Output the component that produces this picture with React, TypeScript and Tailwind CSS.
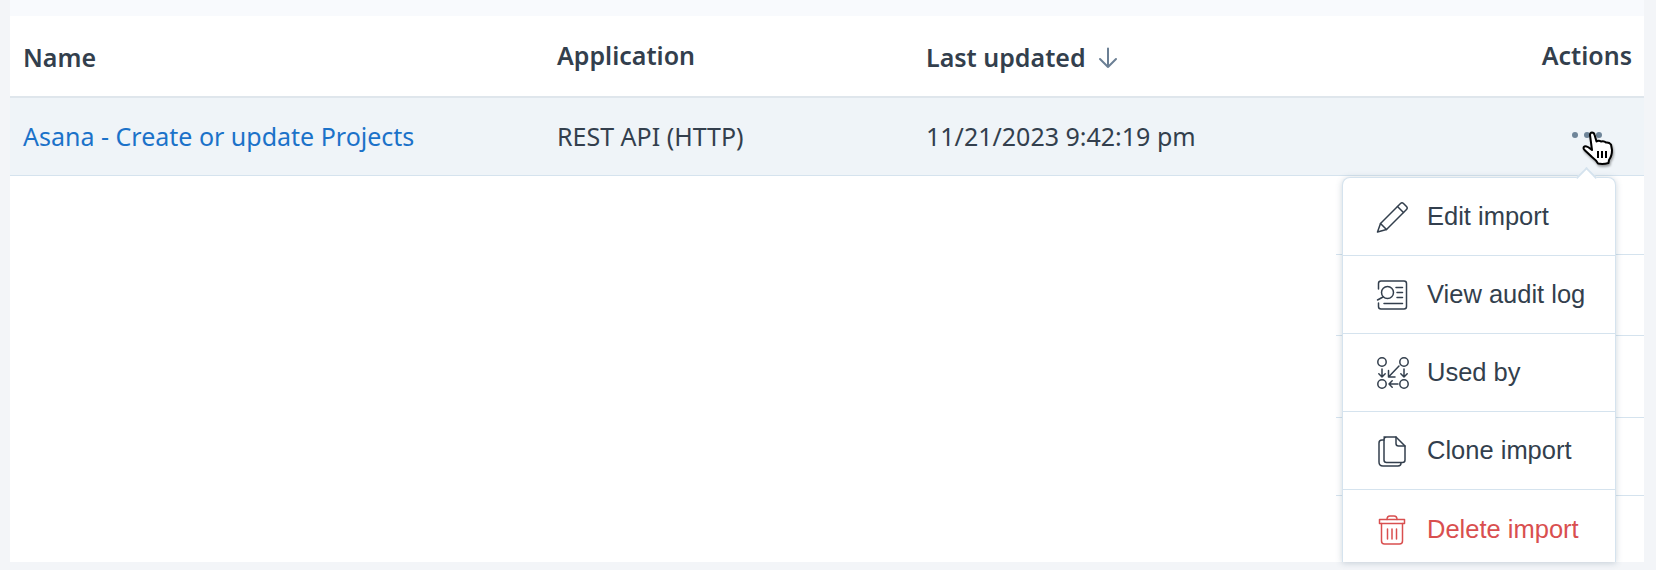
/**
 * Imports table with the row action menu open.
 */

const stroke = '#333f4d';

function PencilIcon() {
  return (
    <svg width="32" height="32" viewBox="0 0 32 32" fill="none" stroke={stroke} strokeWidth="1.5" strokeLinejoin="round" strokeLinecap="round">
      <path d="M1.5 31 L4.5 22.5 L24.5 2.5 Q26 1 27.5 2.5 L30.5 5.5 Q32 7 30.5 8.5 L10.5 28.5 Z" />
      <path d="M4.5 22.5 L10.5 28.5" />
      <path d="M21.5 5.5 L27.5 11.5" />
    </svg>
  );
}

function AuditIcon() {
  return (
    <svg width="32" height="32" viewBox="0 0 32 32" fill="none" stroke={stroke} strokeWidth="1.5" strokeLinecap="round">
      <path d="M2.5 10 V4.5 Q2.5 2 5 2 H28 Q30.5 2 30.5 4.5 V27.5 Q30.5 30 28 30 H5 Q2.5 30 2.5 27.5 V24" />
      <circle cx="11.5" cy="13.5" r="6" />
      <path d="M7 18 L1.5 21" />
      <path d="M20 8.5 H26.5 M21 13.5 H26.5 M21 18.5 H26.5 M8 24.5 H26.5" />
    </svg>
  );
}

function UsedByIcon() {
  return (
    <svg width="34" height="34" viewBox="0 0 34 34" fill="none" stroke={stroke} strokeWidth="1.5" strokeLinecap="round" strokeLinejoin="round">
      <circle cx="6" cy="6" r="4.2" />
      <circle cx="28" cy="6" r="4.2" />
      <circle cx="6" cy="28" r="4.2" />
      <circle cx="28" cy="28" r="4.2" />
      <path d="M6 13 V21 M2.8 17.8 L6 21 L9.2 17.8" />
      <path d="M28 13 V21 M24.8 17.8 L28 21 L31.2 17.8" />
      <path d="M23 10 L12.5 21 M12.5 14.5 V21 H19" />
      <path d="M22 28 H13 M16.2 24.8 L13 28 L16.2 31.2" />
    </svg>
  );
}

function CloneIcon() {
  return (
    <svg width="32" height="32" viewBox="0 0 32 32" fill="none" stroke={stroke} strokeWidth="1.5" strokeLinejoin="round" strokeLinecap="round">
      <path d="M8 2 H20 L29 11 V25 Q29 27.5 26.5 27.5 H10.5 Q8 27.5 8 25 V4.5 Q8 2 10.5 2" />
      <path d="M20 2 V8.5 Q20 11 22.5 11 H29" />
      <path d="M8 5 H6 Q3 5 3 8 V27 Q3 31 7 31 H22 Q25 31 25 28" />
    </svg>
  );
}

function TrashIcon() {
  return (
    <svg width="32" height="32" viewBox="0 0 32 32" fill="none" stroke="#d94f4f" strokeWidth="1.5" strokeLinejoin="round" strokeLinecap="round">
      <path d="M3.5 6.5 H28.5 V10.5 H3.5 Z" />
      <path d="M11 6.5 Q11 3 14 3 H18 Q21 3 21 6.5" />
      <path d="M5.5 10.5 V28 Q5.5 31 8.5 31 H23.5 Q26.5 31 26.5 28 V10.5" />
      <path d="M11.5 16 V26 M16 16 V26 M20.5 16 V26" />
    </svg>
  );
}

function HandCursor() {
  return (
    <svg
      className="absolute left-[1581px] top-[130px] drop-shadow-[1px_2px_1px_rgba(0,0,0,0.35)]"
      width="34"
      height="36"
      viewBox="0 0 34 36"
    >
      <path
        d="M9 5 Q9 2.5 11 2.5 Q13 2.5 13.6 5 L15.5 11.5 Q18 10 20 11.5 Q23 10.5 25 12.5 Q28 12 30 14.5 L31 20 Q31 26 28 30 L27.5 33 Q22 34.5 17 33.5 Q15 30 11 27 L3.5 20 Q1.5 17.5 3.5 16.5 Q5.5 15.5 11 20 Z"
        fill="#fff"
        stroke="#000"
        strokeWidth="2"
        strokeLinejoin="round"
      />
      <path d="M17 21 V28 M21 21 V28 M25 21 V28" stroke="#000" strokeWidth="2" fill="none" />
    </svg>
  );
}

const MENU_ITEMS = [
  { label: 'Edit import', icon: <PencilIcon /> },
  { label: 'View audit log', icon: <AuditIcon /> },
  { label: 'Used by', icon: <UsedByIcon /> },
  { label: 'Clone import', icon: <CloneIcon /> },
  { label: 'Delete import', icon: <TrashIcon />, danger: true },
];

function ActionMenu() {
  return (
    <div className="absolute left-[1342px] top-[177px] h-[385px] w-[274px] rounded-t-lg border-x border-t border-[#d5e3ee] bg-white shadow-[0_1px_6px_rgba(60,90,120,0.25)] font-['Liberation_Sans',sans-serif]">
      {/* Caret */}
      <div className="absolute left-[236px] top-[-8px] h-[15px] w-[15px] rotate-45 border-l-2 border-t-2 border-[#d5e3ee] bg-white" />
      <div className="relative">
        {MENU_ITEMS.map((item, i) => (
          <div
            key={item.label}
            className={`flex h-[78px] items-center border-[#d5e3ee] pl-[33px] ${i < 4 ? 'border-b' : ''}`}
          >
            <span className="flex w-[51px] shrink-0 items-center">{item.icon}</span>
            <span className={`text-[25.5px] ${item.danger ? 'text-[#d94f4f]' : 'text-[#333f4d]'}`}>{item.label}</span>
          </div>
        ))}
      </div>
    </div>
  );
}

export default function App() {
  return (
    <div className="relative flex h-[570px] w-[1656px] flex-col overflow-hidden bg-[#f3f5f8] pb-2 pl-[10px] pr-3 font-['Noto_Sans',sans-serif] text-[#333f4d]">
      <div className="h-4 shrink-0 bg-[#f8fafd]" />
      <div className="flex flex-1 flex-col bg-white">
        {/* Header */}
        <div className="flex h-[82px] shrink-0 items-center border-b-2 border-[#dfe6ec] pl-[13px] pr-[12px] text-[25px] font-semibold">
          <span className="mt-[4px] w-[534px]">Name</span>
          <span className="w-[369px]">Application</span>
          <span className="mt-[4px] flex items-center">
            Last updated
            <svg className="ml-[12px]" width="20" height="22" viewBox="0 0 20 22" fill="none" stroke="#6b7f94" strokeWidth="2" strokeLinecap="round" strokeLinejoin="round">
              <path d="M10 1.5 V20 M2 12 L10 20 L18 12" />
            </svg>
          </span>
          <span className="ml-auto">Actions</span>
        </div>
        {/* Row */}
        <div className="flex h-[78px] shrink-0 items-center border-b border-[#d5e3ee] bg-[#eff4f8] pl-[13px] text-[25px]">
          <span className="w-[534px] text-[#1b72c9]">Asana - Create or update Projects</span>
          <span className="w-[369px]">REST API (HTTP)</span>
          <span>11/21/2023 9:42:19 pm</span>
        </div>
        {/* Empty actions cells behind the menu */}
        <div className="flex flex-col items-end">
          <div className="h-[79px] w-[308px] border-b border-[#d5e3ee]" />
          <div className="h-[81px] w-[308px] border-b border-[#d5e3ee]" />
          <div className="h-[82px] w-[308px] border-b border-[#d5e3ee]" />
          <div className="h-[78px] w-[308px] border-b border-[#d5e3ee]" />
        </div>
      </div>
      {/* Dots */}
      <div className="absolute left-[1572px] top-[132px] flex gap-[6px]">
        <span className="h-[6px] w-[6px] rounded-full bg-[#6f8599]" />
        <span className="h-[6px] w-[6px] rounded-full bg-[#6f8599]" />
        <span className="h-[6px] w-[6px] rounded-full bg-[#6f8599]" />
      </div>
      <ActionMenu />
      <HandCursor />
    </div>
  );
}
